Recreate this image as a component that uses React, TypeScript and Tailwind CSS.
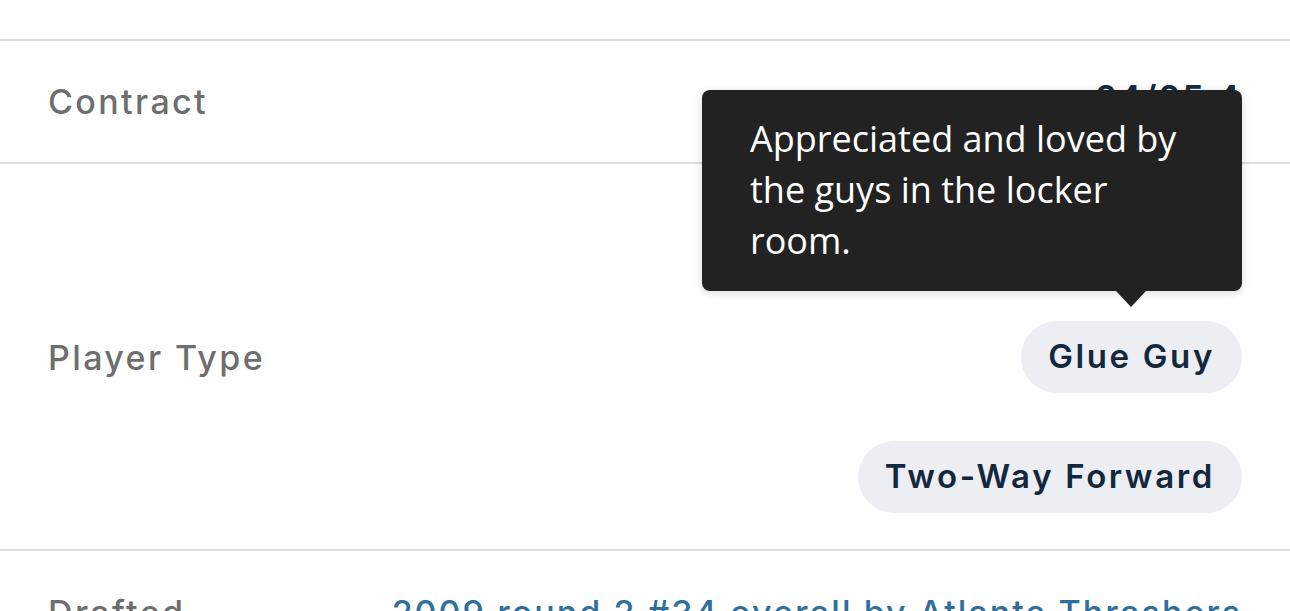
const chips = [
  { label: "Glue Guy", tip: "Appreciated and loved by the guys in the locker room." },
  { label: "Two-Way Forward", tip: null },
];

export default function App() {
  return (
    <div className="w-full h-[611px] overflow-hidden bg-white font-['Inter',sans-serif]">
      <div className="h-[39px]" />

      {/* Contract */}
      <div className="flex items-center justify-between border-t-2 border-[#dcdddd] h-[123px] pl-12 pr-12">
        <span className="text-[34px] font-medium tracking-[0.07em] text-[#6e6e6e]">Contract</span>
        <span className="text-[34px] font-semibold tracking-[0.07em] text-[#1b2a3c] -translate-y-[4px]">24/25 4</span>
      </div>

      {/* Player Type */}
      <div className="flex items-start justify-between border-t-2 border-[#dcdddd] pt-[157px] pb-[36px] pl-12 pr-12">
        <span className="h-[72px] flex items-center text-[34px] font-medium tracking-[0.07em] text-[#6e6e6e]">Player Type</span>
        <div className="flex flex-col items-end gap-[48px]">
          {chips.map((c) => (
            <div key={c.label} className="relative">
              {c.tip && (
                <div className="absolute bottom-full right-0 mb-[30px] w-[540px] rounded-lg bg-[#222222] px-12 pt-[23px] pb-[25px] shadow-[0_2px_10px_rgba(0,0,0,0.15)]">
                  <p className="font-['Open_Sans',sans-serif] text-[36px] leading-[51px] text-white">{c.tip}</p>
                  <div className="absolute top-full right-[96px] w-0 h-0 border-l-[15px] border-r-[15px] border-t-[16px] border-l-transparent border-r-transparent border-t-[#222222]" />
                </div>
              )}
              <span className="flex h-[72px] items-center rounded-full bg-[#eceef3] px-[27px] text-[33px] font-semibold tracking-[0.08em] text-[#14283d]">
                {c.label}
              </span>
            </div>
          ))}
        </div>
      </div>

      {/* Drafted */}
      <div className="flex items-start justify-between border-t-2 border-[#dcdddd] pt-[36px] pl-12 pr-12">
        <span className="text-[34px] font-medium tracking-[0.07em] text-[#6e6e6e]">Drafted</span>
        <span className="text-[34px] font-medium tracking-[0.06em] text-[#2f6f9e]">2009 round 2 #34 overall by Atlanta Thrashers</span>
      </div>
    </div>
  );
}
